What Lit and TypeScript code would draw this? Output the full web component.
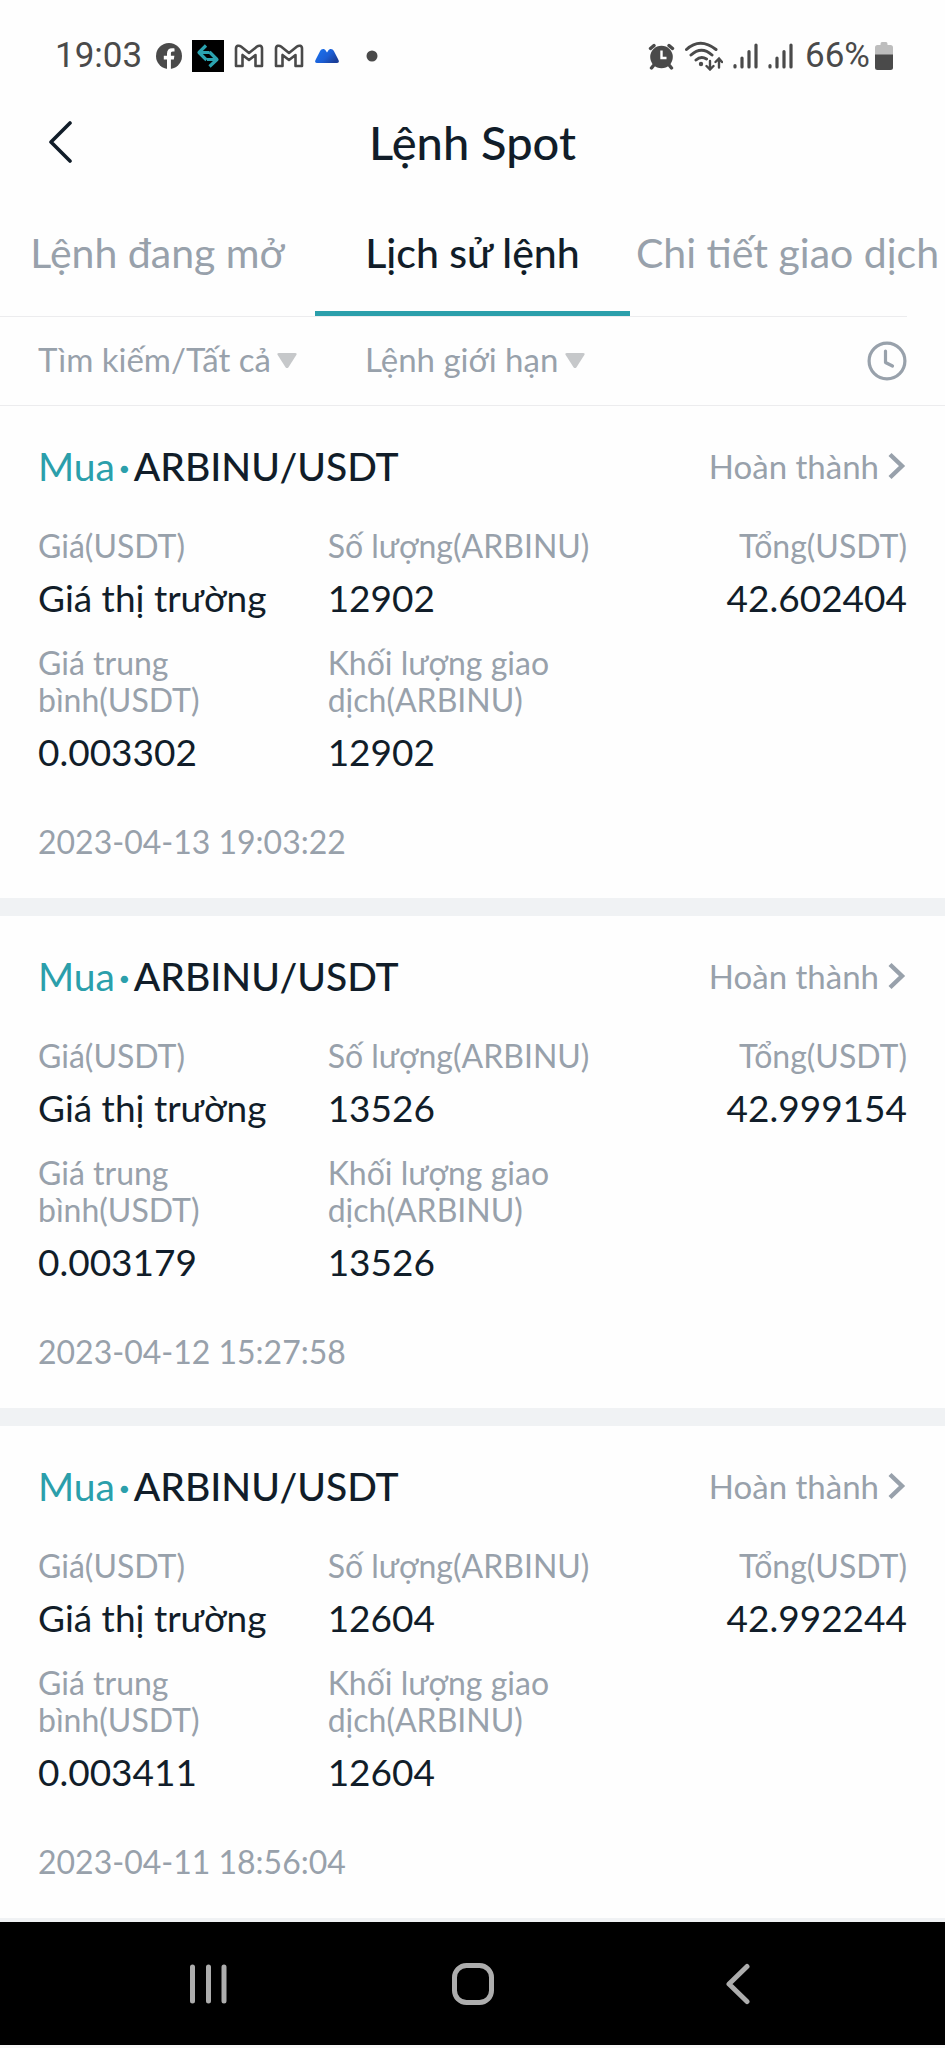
import { LitElement, html, css } from "lit";
import { customElement, property, state } from "lit/decorators.js";
import { classMap } from "lit/directives/class-map.js";

interface Order {
  side: string;
  pair: string;
  status: string;
  price: string;
  amount: string;
  total: string;
  average: string;
  filled: string;
  time: string;
}

const ORDERS: Order[] = [
  { side: "Mua", pair: "ARBINU/USDT", status: "Hoàn thành", price: "Giá thị trường", amount: "12902", total: "42.602404", average: "0.003302", filled: "12902", time: "2023-04-13 19:03:22" },
  { side: "Mua", pair: "ARBINU/USDT", status: "Hoàn thành", price: "Giá thị trường", amount: "13526", total: "42.999154", average: "0.003179", filled: "13526", time: "2023-04-12 15:27:58" },
  { side: "Mua", pair: "ARBINU/USDT", status: "Hoàn thành", price: "Giá thị trường", amount: "12604", total: "42.992244", average: "0.003411", filled: "12604", time: "2023-04-11 18:56:04" },
];

@customElement("status-bar")
class StatusBar extends LitElement {
  static styles = css`
    :host {
      display: flex;
      justify-content: space-between;
      align-items: center;
      height: 90px;
      padding: 22px 52px 0 55px;
      box-sizing: border-box;
      font: 400 35px/40px Roboto, sans-serif;
      color: #4a4a4a;
    }
    .group {
      display: flex;
      align-items: center;
      gap: 10px;
    }
    .text {
      margin-right: 4px;
    }
    .battery-group {
      display: flex;
      align-items: center;
      gap: 5px;
      margin-left: 2px;
    }
    svg {
      display: block;
      flex: none;
    }
  `;

  private mail() {
    return html`<svg width="30" height="24" viewBox="0 0 30 24" fill="none" stroke="#4a4a4a" stroke-width="2.6" stroke-linejoin="round">
      <path d="M2 22V4.5C2 1.5 5 1 7 2.6L15 9l8-6.400C25 1 28 1.500 28 4.500V22H21.500V11L15 16 8.500 11V22Z" />
    </svg>`;
  }

  private signal() {
    return html`<svg width="25" height="26" viewBox="0 0 25 26" stroke="#4a4a4a" stroke-width="3.200" stroke-linecap="round">
      <path d="M2 22.500V24M9 15V24M16 8.500V24M23 2V24" />
    </svg>`;
  }

  render() {
    return html`
      <div class="group">
        <span class="text">19:03</span>
        <svg width="26" height="26" viewBox="0 0 26 26">
          <circle cx="13" cy="13" r="13" fill="#4a4a4a" />
          <path d="M11 26V16.500H7.800V12.800H11V10.400C11 7 13 5.200 16 5.200C17.300 5.200 18.500 5.400 18.500 5.400V8.600H16.900C15.300 8.600 14.900 9.500 14.900 10.500V12.800H18.400L17.800 16.500H14.900V26Z" fill="#fff" />
        </svg>
        <svg width="32" height="32" viewBox="0 0 32 32">
          <rect width="32" height="32" fill="#000" />
          <g fill="none" stroke="#2ba3b0" stroke-width="3.200" stroke-linejoin="round">
            <path d="M14 5.500 7 12.500 14.500 20M8 12.500H17.500" />
            <path d="M17.500 26.500 25 19.500 17.500 12M24 19.500H15" />
          </g>
        </svg>
        ${this.mail()} ${this.mail()}
        <svg width="26" height="16" viewBox="0 0 26 16">
          <defs>
            <linearGradient id="hill" x1="0" x2="1" y1="0" y2=".6">
              <stop offset="0" stop-color="#1a74f0" />
              <stop offset=".6" stop-color="#1c5fd6" />
              <stop offset="1" stop-color="#1b3f9a" />
            </linearGradient>
          </defs>
          <path d="M1.500 12 6 3.200C7.500.4 10.500.4 12 3L13 4.600 14 3C15.500.4 18.500.4 20 3.200L24.500 12C25.500 14 24.500 15 23 15H3C1.500 15 .5 14 1.500 12Z" fill="url(#hill)" />
        </svg>
        <svg width="28" height="12" viewBox="0 0 28 12"><circle cx="22" cy="6" r="5.500" fill="#4a4a4a" /></svg>
      </div>
      <div class="group">
        <svg width="27" height="27" viewBox="0 0 27 27">
          <circle cx="13.500" cy="14" r="11.300" fill="#4a4a4a" />
          <g fill="none" stroke="#4a4a4a" stroke-width="3.400" stroke-linecap="round">
            <path d="M2.500 5.500 6 2.500M21 2.500 24.500 5.500M5.500 22.500 3.500 25M21.500 22.500 23.500 25" />
          </g>
          <path d="M13.500 7.500V15H18.500" fill="none" stroke="#fff" stroke-width="2.400" />
        </svg>
        <svg width="38" height="30" viewBox="0 0 38 30" fill="none" stroke="#4a4a4a" stroke-linecap="round">
          <path d="M1.500 8.500Q15 -4 31 8.500M6 14Q16.500 4.500 27 14M11 19Q16 14.500 21.500 18" stroke-width="3" />
          <circle cx="16" cy="23" r="2.200" fill="#4a4a4a" stroke="none" />
          <path d="M25 20V28M21.500 25 25 28.500 28.500 25M34 26.500V18M30.500 21 34 17.500 37 21" stroke-width="2.400" />
        </svg>
        ${this.signal()} ${this.signal()}
        <div class="battery-group">
          <span>66%</span>
          <svg width="18" height="28" viewBox="0 0 18 28">
            <path d="M5.500 2Q5.500 0 7 0H11Q12.500 0 12.500 2V3H15.500Q18 3 18 5.500V13H0V5.500Q0 3 2.500 3H5.500Z" fill="#bdbdbd" />
            <path d="M0 12.500H18V25.500Q18 28 15.500 28H2.500Q0 28 0 25.500Z" fill="#4a4a4a" />
          </svg>
        </div>
      </div>
    `;
  }
}

@customElement("order-card")
class OrderCard extends LitElement {
  @property({ attribute: false }) order!: Order;

  static styles = css`
    :host {
      display: block;
      padding: 36px 38px 38px;
      color: #111d29;
    }
    .head {
      display: flex;
      justify-content: space-between;
      align-items: center;
      height: 48px;
      margin-bottom: 37px;
    }
    .title {
      margin: 0;
      font-size: 39px;
      line-height: 46px;
      font-weight: 500;
    }
    .side,
    .dot {
      color: #2b9fab;
      font-weight: 400;
    }
    .dot {
      margin: 0 4px;
      font-weight: 700;
    }
    .status {
      display: flex;
      align-items: center;
      gap: 9px;
      padding: 0;
      border: 0;
      background: none;
      font: inherit;
      font-size: 33px;
      line-height: 37px;
      color: #98a1ab;
    }
    .fields {
      display: grid;
      grid-template-columns: repeat(3, 1fr);
      row-gap: 24px;
      margin: 0 0 49px;
    }
    .field {
      display: flex;
      flex-direction: column;
      gap: 12px;
    }
    .end {
      text-align: right;
    }
    dt,
    .time {
      font-size: 32px;
      line-height: 37px;
      color: #98a1ab;
    }
    dd {
      margin: 0;
      font-size: 37px;
      line-height: 44px;
    }
    .time {
      display: block;
    }
  `;

  private field(label: string, value: string, end = false) {
    return html`<div class=${classMap({ field: true, end })}>
      <dt>${label}</dt>
      <dd>${value}</dd>
    </div>`;
  }

  render() {
    const o = this.order;
    const [base, quote] = o.pair.split("/");
    return html`
      <div class="head">
        <h2 class="title"><span class="side">${o.side}</span><span class="dot">·</span>${o.pair}</h2>
        <button class="status" type="button">
          ${o.status}
          <svg width="19" height="28" viewBox="0 0 19 28" fill="none" stroke="#98a1ab" stroke-width="4.400"><path d="M2 2.500 14 14 2 25.500" /></svg>
        </button>
      </div>
      <dl class="fields">
        ${this.field(`Giá(${quote})`, o.price)}
        ${this.field(`Số lượng(${base})`, o.amount)}
        ${this.field(`Tổng(${quote})`, o.total, true)}
        ${this.field(`Giá trung bình(${quote})`, o.average)}
        ${this.field(`Khối lượng giao dịch(${base})`, o.filled)}
      </dl>
      <time class="time" datetime=${o.time}>${o.time}</time>
    `;
  }
}

@customElement("app-root")
class AppRoot extends LitElement {
  @state() private active = 1;

  private tabs = ["Lệnh đang mở", "Lịch sử lệnh", "Chi tiết giao dịch"];
  private filters = [
    { name: "Cặp giao dịch", value: "Tìm kiếm/Tất cả" },
    { name: "Loại lệnh", value: "Lệnh giới hạn" },
  ];

  static styles = css`
    :host {
      display: flex;
      flex-direction: column;
      min-height: 100vh;
      background: #fefefe;
      color: #111d29;
      font-family: Lato, "Noto Sans", sans-serif;
    }
    button,
    select {
      appearance: none;
      padding: 0;
      border: 0;
      background: none;
      font: inherit;
      color: inherit;
    }
    svg {
      display: block;
      flex: none;
    }
    .header {
      display: grid;
      grid-template-columns: 1fr auto 1fr;
      align-items: center;
      height: 104px;
      padding: 0 48px;
    }
    .back {
      justify-self: start;
    }
    .heading {
      margin: 0;
      font-size: 47px;
      line-height: 52px;
      font-weight: 500;
    }
    .tabs {
      display: grid;
      grid-template-columns: repeat(3, 1fr);
    }
    .tab {
      height: 122px;
      border-bottom: 5px solid transparent;
      font-size: 41px;
      line-height: 48px;
      white-space: nowrap;
      color: #98a1ab;
    }
    .tab.active {
      color: #111d29;
      font-weight: 500;
      border-color: #2b9fab;
    }
    .rule {
      height: 1px;
      margin-right: 38px;
      background: #ececee;
    }
    .filters {
      display: flex;
      align-items: center;
      gap: 68px;
      height: 88px;
      padding: 0 38px;
      border-bottom: 1px solid #ececee;
      font-size: 33px;
      line-height: 37px;
      color: #98a1ab;
    }
    .filter {
      display: flex;
      align-items: center;
      gap: 6px;
    }
    .filter select {
      margin-bottom: 4px;
    }
    .history {
      margin-left: auto;
    }
    .orders {
      flex: 1;
    }
    .card {
      border-bottom: 18px solid #f0f2f4;
    }
    .card:last-child {
      border-bottom-width: 4px;
    }
    .nav {
      display: grid;
      grid-template-columns: 1fr auto 1fr;
      align-items: center;
      height: 123px;
      padding: 0 189px;
      background: #000;
      border-bottom: 3px solid #f8f8f8;
    }
    .nav-back {
      justify-self: end;
    }
    .recents {
      justify-self: start;
    }
  `;

  render() {
    return html`
      <status-bar></status-bar>
      <header class="header">
        <button class="back" type="button" aria-label="Quay lại">
          <svg width="26" height="42" viewBox="0 0 26 42" fill="none" stroke="#111d29" stroke-width="3.600" stroke-linecap="round" stroke-linejoin="round"><path d="M22 2 3 21 22 40" /></svg>
        </button>
        <h1 class="heading">Lệnh Spot</h1>
      </header>
      <div class="tabs" role="tablist">
        ${this.tabs.map(
          (label, i) => html`<button
            class=${classMap({ tab: true, active: i === this.active })}
            type="button"
            role="tab"
            aria-selected=${i === this.active}
            @click=${() => (this.active = i)}
          >${label}</button>`
        )}
      </div>
      <div class="rule"></div>
      <div class="filters">
        ${this.filters.map(
          (f) => html`<label class="filter">
            <select aria-label=${f.name}><option>${f.value}</option></select>
            <svg width="20" height="16" viewBox="0 0 20 16"><path d="M2 0H18Q20.500 0 19.300 2L11.500 14.200Q10 16 8.500 14.200L.7 2Q-.5 0 2 0Z" fill="#c6c8ca" /></svg>
          </label>`
        )}
        <button class="history" type="button" aria-label="Thời gian">
          <svg width="40" height="40" viewBox="0 0 40 40" fill="none" stroke="#98a1ab" stroke-width="3.200" stroke-linecap="round" stroke-linejoin="round">
            <circle cx="20" cy="20" r="17.900" />
            <path d="M18.500 10V21.500L25.500 25" />
          </svg>
        </button>
      </div>
      <main class="orders">
        ${ORDERS.map((order) => html`<order-card class="card" .order=${order}></order-card>`)}
      </main>
      <nav class="nav">
        <button class="recents" type="button" aria-label="Gần đây">
          <svg width="40" height="40" viewBox="0 0 40 40" stroke="#adadad" stroke-width="5" stroke-linecap="round"><path d="M3.500 3V37M19.500 3V37M35 3V37" /></svg>
        </button>
        <button type="button" aria-label="Trang chính">
          <svg width="44" height="44" viewBox="0 0 44 44" fill="none" stroke="#adadad" stroke-width="5"><rect x="3.500" y="3.500" width="37" height="37" rx="12" /></svg>
        </button>
        <button class="nav-back" type="button" aria-label="Trở về">
          <svg width="31" height="42" viewBox="0 0 31 42" fill="none" stroke="#adadad" stroke-width="5" stroke-linecap="round" stroke-linejoin="round"><path d="M22 3.500 4 21 22 38.500" /></svg>
        </button>
      </nav>
    `;
  }
}
